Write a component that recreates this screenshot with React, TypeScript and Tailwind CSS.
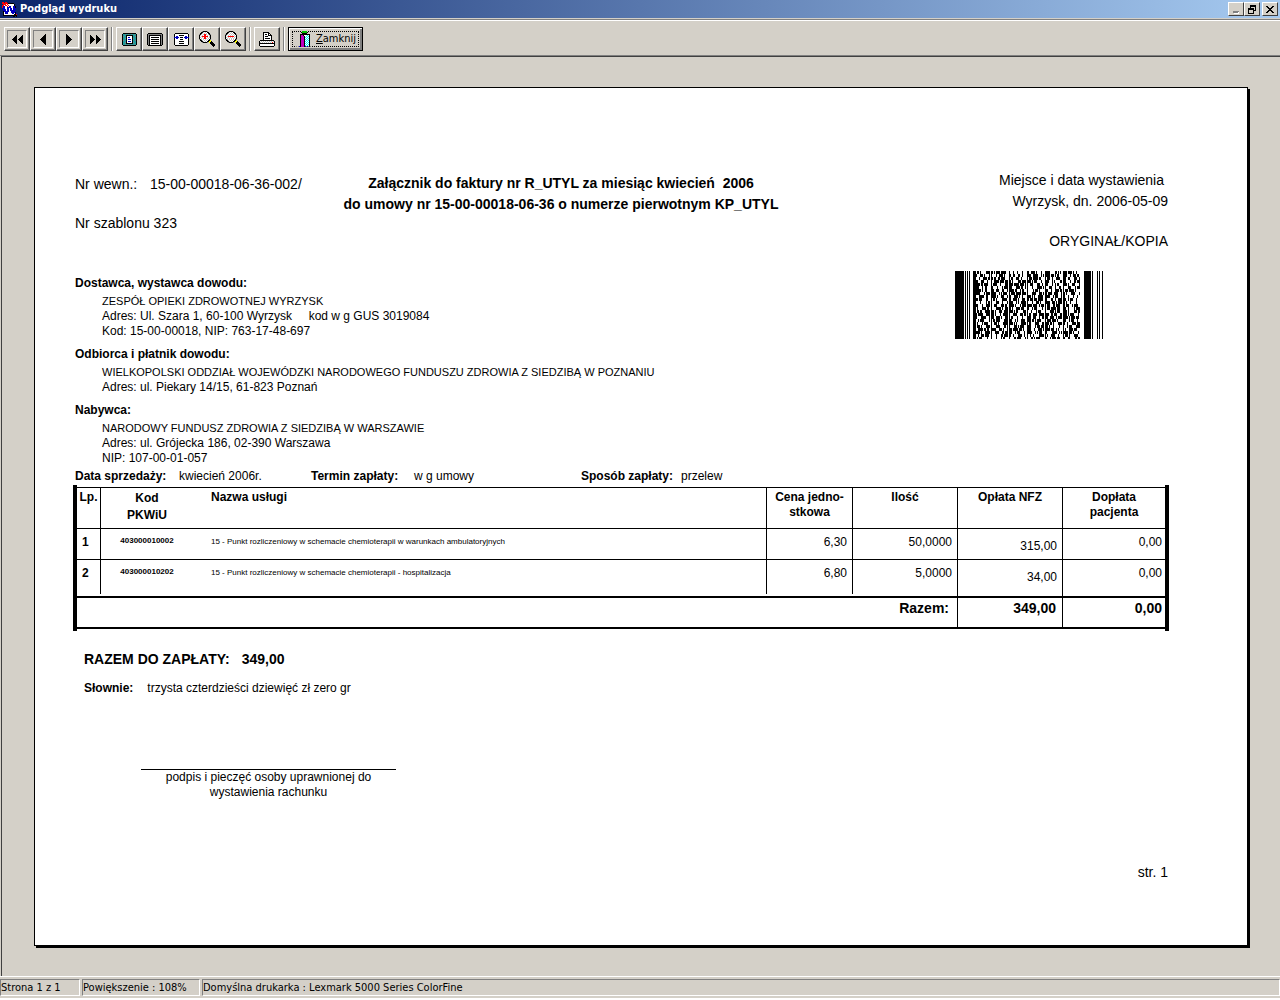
import type { ReactNode } from 'react';

const palette: Record<string, string> = {
    k: '#000000',
    w: '#ffffff',
    g: '#808080',
    s: '#c0c0c0',
    t: '#209c9c',
    b: '#0000c0',
    r: '#ff0000',
    y: '#ffff00',
    m: '#c000c0',
    c: '#00ffff',
    n: '#00c000',
};

// Draws a small bitmap icon, one character per pixel ('.' is transparent)
const Pixels = ({ rows }: { rows: string[] }) => {
    const w = Math.max(...rows.map((r) => r.length));
    return (
        <svg className="shrink-0" width={w} height={rows.length} viewBox={`0 0 ${w} ${rows.length}`} shapeRendering="crispEdges" aria-hidden="true">
            {rows.map((row, y) =>
                row.split('').map((ch, x) => (palette[ch] ? <rect key={`${x}-${y}`} x={x} y={y} width="1" height="1" fill={palette[ch]} /> : null))
            )}
        </svg>
    );
};

const appIcon = [
    'rr.rr..........',
    'rrrrrrkkkkkk...',
    '.rrrwrwwwwwwk..',
    'rrwrrwrwwwwwk..',
    'rbbwwrwbbwwbbk.',
    'rbbwwbbbbwwbbk.',
    'bbbwwbbwbbwbbb.',
    '.bbbwbbwbbwbbb.',
    '.bbbwbbwbbbbb..',
    '.kbbbbbwwbbbbb.',
    '.kwbbbwwwbbbbk.',
    '.kwbbbwwwwbbwkb',
    '.kwwwwwwwwwwkkr',
    '.kkkkkkkkkkkkkk',
    '...........kk.k',
];

const prevIcon = ['.....k', '....kk', '...kkk', '..kkkk', '.kkkkk', 'kkkkkk', '.kkkkk', '..kkkk', '...kkk', '....kk', '.....k'];
const nextIcon = ['k.....', 'kk....', 'kkk...', 'kkkk..', 'kkkkk.', 'kkkkkk', 'kkkkk.', 'kkkk..', 'kkk...', 'kk....', 'k.....'];
const firstIcon = ['....k.....k', '...kk....kk', '..kkk...kkk', '.kkkk..kkkk', 'kkkkk.kkkkk', '.kkkk..kkkk', '..kkk...kkk', '...kk....kk', '....k.....k'];
const lastIcon = ['k.....k....', 'kk....kk...', 'kkk...kkk..', 'kkkk..kkkk.', 'kkkkk.kkkkk', 'kkkk..kkkk.', 'kkk...kkk..', 'kk....kk...', 'k.....k....'];

const wholePageIcon = [
    '.kkkkkkkkkkkkk.',
    'kttgttgttgttgtk',
    'ktttkkkkkkktttk',
    'kgttkwwwwwkttgk',
    'ktttkwbbwwktttk',
    'kttgkwwwwwkgttk',
    'ktttkwbbbwktttk',
    'kgttkwwwwwkttgk',
    'ktttkwbbbwktttk',
    'kttgkwwwwwkgttk',
    'ktttkkkkkkktttk',
    'kttgttgttgttgtk',
    '.kkkkkkkkkkkkk.',
];

const pageWidthIcon = [
    '.kkkkkkkkkkkkkk.',
    'kggggggggggggggk',
    'kgkkkkkkkkkkkkgk',
    'kgkwwwwwwwwwwkgk',
    'kgkwkkkkkkkkwkgk',
    'kgkwwwwwwwwwwkgk',
    'kgkwkkkkkkkkwkgk',
    'kgkwwwwwwwwwwkgk',
    'kgkwkkkkkkkkwkgk',
    'kgkwwwwwwwwwwkgk',
    'kgkwkkkkkkkkwkgk',
    'kgkwwwwwwwwwwkgk',
    '.kkkkkkkkkkkkkk.',
];

const textWidthIcon = [
    '.kkkkkkkkkkkkk.',
    'kwwwwwwwwwwwwwk',
    'kwwwwkkkkkwwwwk',
    'kwbbwwwwwwwbbwk',
    'bbbbbwkkkwbbbbb',
    'kwbbwwwwwwwbbwk',
    'kwwwwwkkkwwwwwk',
    'kwwwwwwwwwwwwwk',
    'kwwwwkkkkkwwwwk',
    'kwwwwwwwwwwwwwk',
    'kwwwwkkkkkwwwwk',
    'kwwwwwwwwwwwwwk',
    '.kkkkkkkkkkkkk.',
];

const zoomInIcon = [
    '...gkkkkg.......',
    '..kkswswkk......',
    '.kkswswswkk.....',
    'gkswsrrswskg....',
    'kswswrrwswsk....',
    'kwsrrrrrrwsk....',
    'kswswrrwswsk....',
    'kwswsrrswswk....',
    'gkswswswswkg....',
    '.kkswswswkky....',
    '..kkswswkkyyk...',
    '...gkkkkg.ykkk..',
    '...........kkkk.',
    '............kkkk',
    '.............kkk',
    '..............k.',
];

const zoomOutIcon = [
    '...gkkkkg.......',
    '..kkswswkk......',
    '.kkswswswkk.....',
    'gkswswswswkg....',
    'kswswswswswk....',
    'kwsrrrrrrwsk....',
    'kswswswswswk....',
    'kwswswswswsk....',
    'gkswswswswkg....',
    '.kkswswswkky....',
    '..kkswswkkyyk...',
    '...gkkkkg.ykkk..',
    '...........kkkk.',
    '............kkkk',
    '.............kkk',
    '..............k.',
];

const printerIcon = [
    '....kkkkkk......',
    '....kwwwwkk.....',
    '....kwkkwkwk....',
    '....kwwwwkkkk...',
    '....kwkkkwwwk...',
    '....kwwwwwwwk...',
    '....kwkkkkkwk...',
    '....kwwwwwwwk...',
    '.kkkkkkkkkkkkkk.',
    'kwswswswswswswsk',
    'kswswswswswswrwk',
    'kkkkkkkkkkkkkkkk',
    'kwwwwwwwwwwwwwwk',
    'kwwwwwwwwwwwwwwk',
    '.kkkkkkkkkkkkkk.',
];

const doorIcon = [
    '......nnnnn.....',
    '.....knnnnnk....',
    '......kkkkk.....',
    '....kkkkkkkkkk..',
    '....kmmkwwwcwk..',
    '....kmmmkwcwck..',
    '....kmmmkcwcwk..',
    '....kmmmkwcwck..',
    '....kmmmkcwcwk..',
    '....kmmmkwcwck..',
    '....kmmmkcwcwk..',
    '....kmmmkwcwck..',
    '....kmmmkcwcwk..',
    '....kmmmkwcwck..',
    '....kmmmkcwcwk..',
    'g.gbkmmmkbgbgkg.',
];

const minimizeIcon = ['......', '......', '......', '......', '......', '......', 'gggggg', 'gggggw', '.wwwww'];
const restoreIcon = ['..kkkkkk', '..kkkkkk', '..k....k', 'kkkkkk.k', 'kkkkkk.k', 'k....kkk', 'k....k..', 'k....k..', 'kkkkkk..'];
const closeIcon = ['kk....kk', '.kk..kk.', '..kkkk..', '...kk...', '..kkkk..', '.kk..kk.', 'kk....kk'];

const WindowButton = ({ label, icon }: { label: string; icon: string[] }) => (
    <button
        aria-label={label}
        className="flex h-[14px] w-4 items-center justify-center border border-t-white border-l-white border-r-[#404040] border-b-[#404040] bg-[#d4d0c8]"
    >
        <Pixels rows={icon} />
    </button>
);

const ToolButton = ({ label, icon, framed }: { label: string; icon: string[]; framed?: boolean }) => (
    <button
        aria-label={label}
        className="flex h-6 w-[26px] items-center justify-center border border-t-white border-l-white border-r-[#404040] border-b-[#404040] shadow-[inset_-1px_-1px_0_#808080]"
    >
        {framed ? (
            <span className="flex h-[18px] w-5 items-center justify-center border border-t-[#808080] border-l-[#808080] border-r-white border-b-white">
                <Pixels rows={icon} />
            </span>
        ) : (
            <Pixels rows={icon} />
        )}
    </button>
);

const Separator = () => <div className="mx-[3px] h-6 w-0.5 border-l border-l-[#808080] border-r border-r-white" />;

// PDF417 style symbol: 6 codewords of 18px in 23 rows between start and stop bars
const Barcode = () => {
    let seed = 417;
    const rand = (n: number) => {
        seed = (seed * 48271) % 2147483647;
        return Math.floor((seed / 2147483647) * n);
    };
    let d = '';
    for (let row = 0; row < 23; row++) {
        for (let word = 0; word < 6; word++) {
            const widths = [1, 1, 1, 1, 1, 1, 1, 1];
            let left = 10;
            while (left > 0) {
                const i = rand(8);
                const add = Math.min(left, 1 + rand(3));
                if (widths[i] + add < 6) {
                    widths[i] += add;
                    left -= add;
                }
            }
            let x = 18 + word * 18;
            widths.forEach((w, i) => {
                if (i % 2 === 0) d += `M${x} ${row * 3}h${w}v3h-${w}z`;
                x += w;
            });
        }
    }
    const guards = [[0, 9], [10, 1], [12, 1], [14, 1], [18, 3], [129, 7], [137, 1], [142, 1], [144, 1], [147, 1]];
    return (
        <svg width="148" height="68" viewBox="0 0 148 68" shapeRendering="crispEdges" role="img" aria-label="PDF417">
            {guards.map(([x, w]) => <rect key={x} x={x} y="0" width={w} height="68" />)}
            <path d={d} />
        </svg>
    );
};

const Party = ({ title, name, children }: { title: string; name: string; children: ReactNode }) => (
    <section>
        <h2 className="font-bold leading-[22px]">{title}</h2>
        <div className="pl-[27px] leading-[15px]">
            <p className="text-[11px] leading-[15px]">{name}</p>
            {children}
        </div>
    </section>
);

const items = [
    { lp: 1, code: '403000010002', name: '15 - Punkt rozliczeniowy w schemacie chemioterapii w warunkach ambulatoryjnych', price: '6,30', qty: '50,0000', nfz: '315,00', extra: '0,00' },
    { lp: 2, code: '403000010202', name: '15 - Punkt rozliczeniowy w schemacie chemioterapii - hospitalizacja', price: '6,80', qty: '5,0000', nfz: '34,00', extra: '0,00' },
];

const ItemsTable = () => (
    <div className="-ml-0.5 -mr-px border-x-4 border-black py-0.5">
        <table className="w-full table-fixed border-separate border-spacing-0 border-t border-b-2 border-black leading-[15px]">
            <colgroup>
                <col className="w-6" />
                <col className="w-[92px]" />
                <col />
                <col className="w-[86px]" />
                <col className="w-[105px]" />
                <col className="w-[105px]" />
                <col className="w-[102px]" />
            </colgroup>
            <thead>
                <tr className="h-[41px] align-top">
                    <th className="border-r border-b border-black pt-0.5">Lp.</th>
                    <th className="border-b border-black pt-0.5 leading-[17px]">Kod<br />PKWiU</th>
                    <th className="border-r border-b border-black pt-0.5 pl-[18px] text-left">Nazwa usługi</th>
                    <th className="border-r border-b border-black pt-0.5">Cena jedno-<br />stkowa</th>
                    <th className="border-r border-b border-black pt-0.5">Ilość</th>
                    <th className="border-r border-b border-black pt-0.5">Opłata NFZ</th>
                    <th className="border-b border-black pt-0.5">Dopłata<br />pacjenta</th>
                </tr>
            </thead>
            <tbody className="[&>tr:first-child>td]:border-b">
                {items.map((item) => (
                    <tr key={item.lp} className="h-[31px] align-top text-right last:h-[34px]">
                        <td className="border-r border-black pt-[6px] pl-[5px] text-left font-bold">{item.lp}</td>
                        <td className="border-black pt-[6px] text-center text-[8px] leading-3 font-bold">{item.code}</td>
                        <td className="border-r border-black pt-[5px] pl-[18px] text-left text-[8px]">{item.name}</td>
                        <td className="border-r border-black pt-[6px] pr-[5px]">{item.price}</td>
                        <td className="border-r border-black pt-[6px] pr-[5px]">{item.qty}</td>
                        <td className="border-r border-black pt-[10px] pr-[5px]">{item.nfz}</td>
                        <td className="border-black pt-[6px] pr-[3px]">{item.extra}</td>
                    </tr>
                ))}
            </tbody>
            <tfoot>
                <tr className="h-0.5" aria-hidden="true">
                    <td colSpan={5} className="border-r border-black" />
                    <td className="border-r border-black" />
                    <td />
                </tr>
                <tr className="h-[31px] text-right align-top text-sm font-bold">
                    <td colSpan={5} className="border-t-2 border-r border-black pr-2">Razem:</td>
                    <td className="border-t-2 border-r border-black pr-[6px]">349,00</td>
                    <td className="border-t-2 border-black pr-[3px]">0,00</td>
                </tr>
            </tfoot>
        </table>
    </div>
);

const Invoice = () => (
    <article className="mx-8 border border-black bg-white pt-[82px] pr-[79px] pb-[63px] pl-10 font-['Liberation_Sans',Arial,sans-serif] text-xs text-black shadow-[2px_2px_0_#000]">
        <header className="grid grid-cols-[225px_1fr_346px] text-sm leading-5">
            <div className="pt-1">
                <div className="grid grid-cols-[75px_1fr]">
                    <span>Nr wewn.:</span>
                    <span className="whitespace-nowrap">15-00-00018-06-36-002/</span>
                </div>
                <p className="mt-[19px]">Nr szablonu 323</p>
            </div>
            <h1 className="pt-[3px] text-center leading-[21px] font-bold whitespace-pre">
                Załącznik do faktury nr R_UTYL za miesiąc kwiecień  2006<br />
                do umowy nr 15-00-00018-06-36 o numerze pierwotnym KP_UTYL
            </h1>
            <div className="text-right leading-[21px]">
                <p className="pr-1">Miejsce i data wystawienia</p>
                <p>Wyrzysk, dn. 2006-05-09</p>
                <p className="mt-[19px]">ORYGINAŁ/KOPIA</p>
            </div>
        </header>

        <div className="mt-[19px] flex items-start justify-between">
            <div className="flex flex-col gap-1 pt-px">
                <Party title="Dostawca, wystawca dowodu:" name="ZESPÓŁ OPIEKI ZDROWOTNEJ WYRZYSK">
                    <p className="whitespace-pre">Adres: Ul. Szara 1, 60-100 Wyrzysk     kod w g GUS 3019084</p>
                    <p>Kod: 15-00-00018, NIP: 763-17-48-697</p>
                </Party>
                <Party title="Odbiorca i płatnik dowodu:" name="WIELKOPOLSKI ODDZIAŁ WOJEWÓDZKI NARODOWEGO FUNDUSZU ZDROWIA Z SIEDZIBĄ W POZNANIU">
                    <p>Adres: ul. Piekary 14/15, 61-823 Poznań</p>
                </Party>
                <Party title="Nabywca:" name="NARODOWY FUNDUSZ ZDROWIA Z SIEDZIBĄ W WARSZAWIE">
                    <p>Adres: ul. Grójecka 186, 02-390 Warszawa</p>
                    <p>NIP: 107-00-01-057</p>
                </Party>
            </div>
            <div className="mr-[65px]">
                <Barcode />
            </div>
        </div>

        <dl className="grid grid-cols-[104px_132px_103px_167px_100px_1fr] pt-px leading-[18px]">
            <dt className="font-bold">Data sprzedaży:</dt>
            <dd>kwiecień 2006r.</dd>
            <dt className="font-bold">Termin zapłaty:</dt>
            <dd>w g umowy</dd>
            <dt className="font-bold">Sposób zapłaty:</dt>
            <dd>przelew</dd>
        </dl>

        <ItemsTable />

        <div className="mt-[18px] flex gap-3 pl-[9px] text-sm leading-5 font-bold">
            <span>RAZEM DO ZAPŁATY:</span>
            <span>349,00</span>
        </div>
        <div className="mt-3 flex gap-[14px] pl-[9px] leading-[15px]">
            <span className="font-bold">Słownie:</span>
            <span>trzysta czterdzieści dziewięć zł zero gr</span>
        </div>

        <p className="mt-[73px] ml-[66px] w-[255px] border-t border-black text-center leading-[15px]">
            podpis i pieczęć osoby uprawnionej do<br />wystawienia rachunku
        </p>

        <p className="mt-[62px] text-right text-sm leading-5">str. 1</p>
    </article>
);

const App = () => {
    return (
        <div className="flex min-h-screen flex-col bg-[#d4d0c8] font-['DejaVu_Sans_Condensed','DejaVu_Sans',sans-serif] text-[11px] text-black">
            <div className="flex h-[18px] items-center bg-linear-to-r/srgb from-[#0a246a] to-[#a6caf0] pr-0.5 pl-0.5">
                <Pixels rows={appIcon} />
                <span className="flex-1 pl-[3px] font-bold text-white">Podgląd wydruku</span>
                <div className="flex">
                    <WindowButton label="Minimalizuj" icon={minimizeIcon} />
                    <WindowButton label="Przywróć" icon={restoreIcon} />
                    <div className="ml-0.5">
                        <WindowButton label="Zamknij okno" icon={closeIcon} />
                    </div>
                </div>
            </div>

            <div className="mt-px flex items-center border-t border-t-[#808080] pt-[7px] pb-1 pl-1 shadow-[inset_0_1px_0_#fff]">
                <ToolButton label="Pierwsza strona" icon={firstIcon} framed />
                <ToolButton label="Poprzednia strona" icon={prevIcon} framed />
                <ToolButton label="Następna strona" icon={nextIcon} framed />
                <ToolButton label="Ostatnia strona" icon={lastIcon} framed />
                <Separator />
                <ToolButton label="Cała strona" icon={wholePageIcon} />
                <ToolButton label="Szerokość strony" icon={pageWidthIcon} />
                <ToolButton label="Szerokość tekstu" icon={textWidthIcon} />
                <ToolButton label="Powiększ" icon={zoomInIcon} />
                <ToolButton label="Pomniejsz" icon={zoomOutIcon} />
                <Separator />
                <ToolButton label="Drukuj" icon={printerIcon} />
                <Separator />
                <button className="h-6 w-[75px] border border-black p-[3px] shadow-[inset_1px_1px_0_#fff,inset_-2px_-2px_0_#808080]">
                    <span className="flex h-full items-center gap-1 border border-dotted border-black pl-[3px]">
                        <Pixels rows={doorIcon} />
                        <span><u>Z</u>amknij</span>
                    </span>
                </button>
            </div>

            <main className="flex-1 border-t border-t-[#808080] pl-px">
                <div className="h-full border-t border-l border-[#404040] pt-[30px] pb-[30px]">
                    <Invoice />
                </div>
            </main>

            <footer className="flex h-6 gap-0.5 border-t border-white pt-0.5 pb-1 shadow-[inset_0_-2px_0_#fff] leading-4">
                <div className="w-20 border border-t-[#808080] border-l-[#808080] border-r-white border-b-white">Strona 1 z 1</div>
                <div className="w-[118px] border border-t-[#808080] border-l-[#808080] border-r-white border-b-white">Powiększenie : 108%</div>
                <div className="flex-1 border border-t-[#808080] border-l-[#808080] border-r-white border-b-white">Domyślna drukarka : Lexmark 5000 Series ColorFine</div>
            </footer>
        </div>
    );
};

export default App;
